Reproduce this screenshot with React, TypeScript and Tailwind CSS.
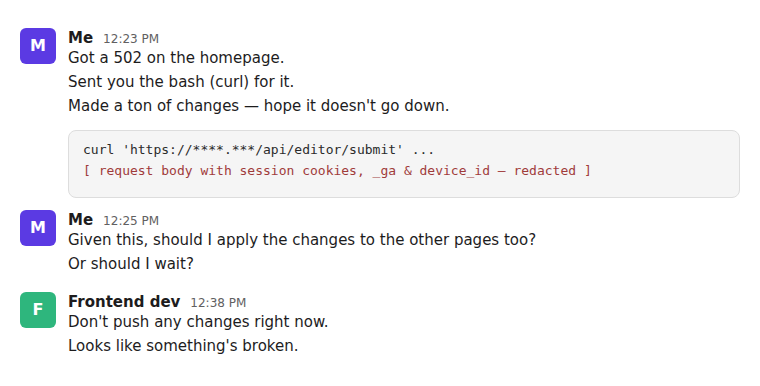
import React from "react";

type Msg = {
  initial: string;
  color: string;
  name: string;
  time: string;
  lines: string[];
  code?: boolean;
  mt: string;
};

const msgs: Msg[] = [
  {
    initial: "M",
    color: "bg-[#5b3ae3]",
    name: "Me",
    time: "12:23 PM",
    lines: [
      "Got a 502 on the homepage.",
      "Sent you the bash (curl) for it.",
      "Made a ton of changes \u2014 hope it doesn't go down.",
    ],
    code: true,
    mt: "mt-0",
  },
  {
    initial: "M",
    color: "bg-[#5b3ae3]",
    name: "Me",
    time: "12:25 PM",
    lines: ["Given this, should I apply the changes to the other pages too?", "Or should I wait?"],
    mt: "mt-3",
  },
  {
    initial: "F",
    color: "bg-[#2eb67d]",
    name: "Frontend dev",
    time: "12:38 PM",
    lines: ["Don't push any changes right now.", "Looks like something's broken."],
    mt: "mt-4",
  },
];

export default function App() {
  return (
    <div
      className="w-[760px] h-[386px] bg-white pt-[28px] pl-[20px] pr-[20px] text-[#1d1c1d]"
      style={{ fontFamily: '"DejaVu Sans", sans-serif' }}
    >
      {msgs.map((m, i) => (
        <div key={i} className={`flex ${m.mt}`}>
          <div
            className={`w-9 h-9 shrink-0 rounded-md ${m.color} flex items-center justify-center text-white font-bold text-[16px]`}
          >
            {m.initial}
          </div>
          <div className="ml-3 flex-1 min-w-0">
            <div className="flex items-baseline h-[18px] leading-[20px]">
              <span className="font-bold text-[15px]">{m.name}</span>
              <span className="ml-[10px] text-[12px] text-[#616061]">{m.time}</span>
            </div>
            {m.lines.map((l, j) => (
              <div key={j} className="text-[15px] leading-[24px]">
                {l}
              </div>
            ))}
            {m.code && (
              <div
                className="mt-3 rounded-lg border border-[#dddddd] bg-[#f5f5f5] px-[14px] pt-[8px] pb-[16px] text-[13px] leading-[21px]"
                style={{ fontFamily: '"DejaVu Sans Mono", monospace' }}
              >
                <div className="text-[#2b2b2b]">curl 'https://****.***/api/editor/submit' ...</div>
                <div className="text-[#a03b3b]">
                  {"[ request body with session cookies, _ga & device_id \u2014 redacted ]"}
                </div>
              </div>
            )}
          </div>
        </div>
      ))}
    </div>
  );
}
